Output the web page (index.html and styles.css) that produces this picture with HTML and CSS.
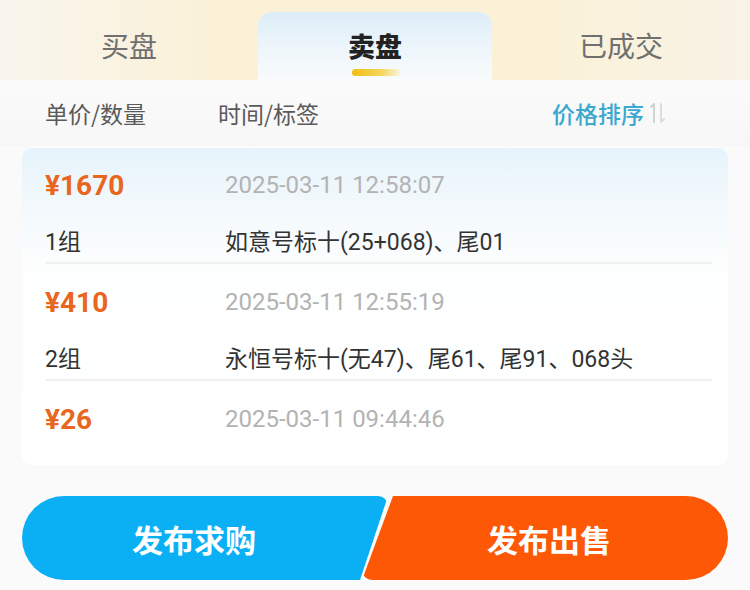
FILE: index.html
```html
<!DOCTYPE html>
<html lang="zh-CN">
<head>
    <meta charset="UTF-8">
    <meta name="viewport" content="width=device-width, initial-scale=1.0">
    <title>卖盘</title>
    <link rel="stylesheet" href="styles.css">
</head>
<body>
    <div class="tabs">
        <div class="tab">买盘</div>
        <div class="tab active">
            <span class="tab-label">卖盘</span>
        </div>
        <div class="tab">已成交</div>
    </div>

    <div class="list-head">
        <span class="col-price">单价/数量</span>
        <span class="col-time">时间/标签</span>
        <span class="sort">价格排序
            <svg class="sort-icon" width="16" height="24" viewBox="0 0 16 24">
                <path d="M4 21V3L1 6" fill="none" stroke="#cfcfcf" stroke-width="1.8" stroke-linecap="round" stroke-linejoin="round"/>
                <path d="M11 3V21L14 18" fill="none" stroke="#dadada" stroke-width="1.8" stroke-linecap="round" stroke-linejoin="round"/>
            </svg>
        </span>
    </div>

    <div class="card">
        <div class="item">
            <div class="price">¥1670</div>
            <div class="time">2025-03-11 12:58:07</div>
            <div class="group">1组</div>
            <div class="tags">如意号标十(25+068)、尾01</div>
        </div>
        <div class="item">
            <div class="price">¥410</div>
            <div class="time">2025-03-11 12:55:19</div>
            <div class="group">2组</div>
            <div class="tags">永恒号标十(无47)、尾61、尾91、068头</div>
        </div>
        <div class="item last">
            <div class="price">¥26</div>
            <div class="time">2025-03-11 09:44:46</div>
        </div>
    </div>

    <div class="actions">
        <button class="btn btn-buy">发布求购</button>
        <button class="btn btn-sell">发布出售</button>
    </div>
</body>
</html>
```

FILE: styles.css
```css
body {
    margin: 0;
    width: 750px;
    height: 590px;
    overflow: hidden;
    background: #fafafa;
    font-family: Roboto, "Noto Sans CJK SC", sans-serif;
    color: #333;
}

.tabs {
    display: grid;
    grid-template-columns: 258px 234px 1fr;
    padding-top: 12px;
    height: 68px;
    background: linear-gradient(90deg, #f8f5ee 0%, #fbf1d6 30%, #fbf1d6 70%, #f8f3e6 100%);
}

.tab {
    display: flex;
    align-items: center;
    justify-content: center;
    font-family: "Noto Sans CJK SC", sans-serif;
    font-size: 28px;
    color: #707070;
    padding-bottom: 2px;
}

.tab.active {
    background: linear-gradient(180deg, #dcedf8 0%, #eef6fb 55%, #f9fbfc 100%);
    border-radius: 14px 14px 0 0;
    color: #222;
    font-weight: 900;
    font-size: 27px;
}

.tab-label {
    position: relative;
}

.tab-label::after {
    content: "";
    position: absolute;
    left: 4px;
    bottom: -11px;
    width: 48px;
    height: 7px;
    border-radius: 4px;
    background: linear-gradient(90deg, #f0bf16 0%, #f6d45a 60%, rgba(252, 236, 180, 0.4) 100%);
}

.list-head {
    display: flex;
    align-items: center;
    height: 66px;
    padding: 0 0 0 45px;
    background: linear-gradient(180deg, #fbfbfb 0%, #f7f7f7 100%);
    font-family: "Noto Sans CJK SC", sans-serif;
    font-size: 23px;
    color: #5a5a5a;
}

.col-price {
    width: 173px;
}

.sort {
    margin-left: auto;
    margin-right: 84px;
    display: flex;
    align-items: center;
    color: #3ca8d0;
    font-size: 23px;
    font-weight: 500;
}

.sort-icon {
    margin-left: 6px;
}

.card {
    margin: 2px 22px 0;
    height: 317px;
    overflow: hidden;
    border-radius: 10px;
    background: linear-gradient(180deg, #e6f3fb 0%, #f3f9fc 60px, #fdfefe 120px, #fff 100%);
}

.item {
    display: grid;
    grid-template-columns: 180px 1fr;
    grid-template-rows: 40px 40px;
    row-gap: 15px;
    align-items: center;
    margin: 0 16px 0 23px;
    padding: 18px 0 2px;
    border-bottom: 2px solid #f1f1f1;
}

.item:first-child {
    padding-top: 17px;
}

.item.last {
    border-bottom: none;
    grid-template-rows: 40px;
}

.price {
    color: #e8661e;
    font-size: 28px;
    font-weight: bold;
}

.time {
    color: #b3b3b3;
    font-size: 24px;
}

.group,
.tags {
    font-size: 23px;
    color: #333;
}

.actions {
    display: flex;
    margin: 31px 22px 0;
    height: 84px;
}

.btn {
    border: none;
    color: #fff;
    font-family: "Noto Sans CJK SC", sans-serif;
    font-size: 31px;
    font-weight: bold;
    height: 84px;
    padding: 0;
}

.btn-buy {
    width: 366px;
    background: #0bb0f4;
    border-radius: 42px 10px 10px 42px;
    clip-path: polygon(0 0, 100% 0, calc(100% - 28px) 100%, 0 100%);
    padding-right: 22px;
}

.btn-sell {
    width: 366px;
    margin-left: -26px;
    background: #fd5805;
    border-radius: 10px 42px 42px 10px;
    clip-path: polygon(31px 0, 100% 0, 100% 100%, 0 100%);
    padding-left: 8px;
}
```
